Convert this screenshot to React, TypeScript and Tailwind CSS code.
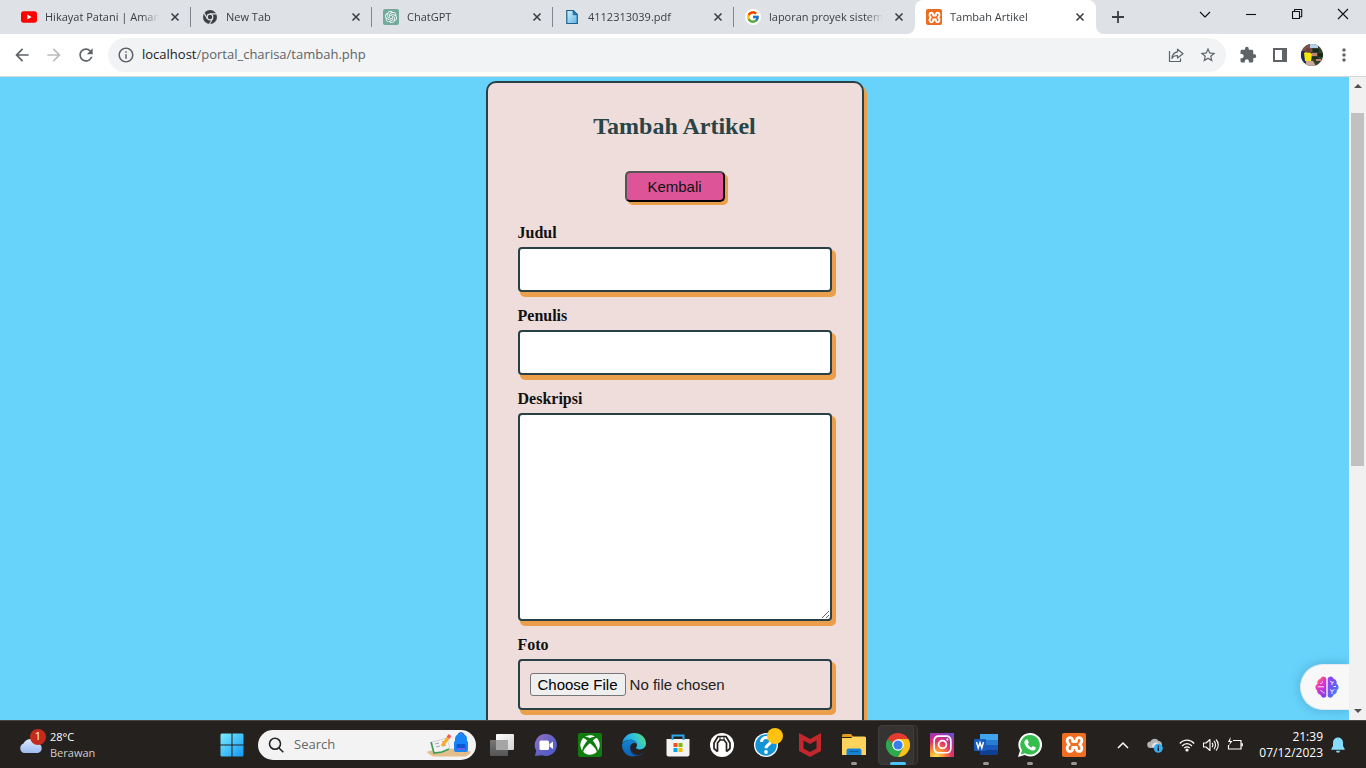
import React from "react";
import { FcGoogle } from "react-icons/fc";
import { MdArrowBack, MdArrowForward, MdExtension, MdInfoOutline, MdMoreVert, MdRefresh, MdStarBorder } from "react-icons/md";
import { SiOpenai } from "react-icons/si";
import { FaInstagram, FaXbox } from "react-icons/fa";

const uiFont = "font-['Segoe_UI','Open_Sans',sans-serif]";

function YoutubeIcon() {
  return (
    <svg viewBox="0 0 16 16" className="size-4">
      <rect y="2.3" width="16" height="11.4" rx="2.6" fill="#f00" />
      <path d="M6.4 5.6v4.8L10.6 8z" fill="#fff" />
    </svg>
  );
}

function GreyChromeIcon() {
  return (
    <svg viewBox="0 0 16 16" className="size-4">
      <circle cx="8" cy="8" r="7" fill="#3c4043" />
      <circle cx="8" cy="8" r="3.4" fill="#dee1e6" />
      <circle cx="8" cy="8" r="2.2" fill="#3c4043" />
      <path d="M8 4.9h6.6M5.3 9.6 2 3.9M10.7 9.5 7.4 15.2" stroke="#dee1e6" strokeWidth="1.1" />
    </svg>
  );
}

function GptIcon() {
  return (
    <span className="flex size-4 items-center justify-center rounded-[2px] bg-[#74aa9c]">
      <SiOpenai className="size-3 text-white" />
    </span>
  );
}

function PdfFileIcon() {
  return (
    <svg viewBox="0 0 16 16" className="size-4">
      <defs>
        <linearGradient id="sheet" x1="0" y1="0" x2="1" y2="1">
          <stop offset="0" stopColor="#d8f1fc" />
          <stop offset="1" stopColor="#5bb4e6" />
        </linearGradient>
      </defs>
      <path d="M2.8 1.5h6.5l4 4v9H2.8z" fill="url(#sheet)" stroke="#1b5f8c" strokeWidth="1.2" />
      <path d="M9.2 1.5v4.2h4.1z" fill="#1d86c4" stroke="#1b5f8c" strokeWidth=".8" />
    </svg>
  );
}

function GoogleIcon() {
  return (
    <span className="flex size-4 items-center justify-center rounded-full bg-white">
      <FcGoogle className="size-[14px]" />
    </span>
  );
}

function XamppTabIcon() {
  return (
    <span className="flex size-4 items-center justify-center rounded-[2px] bg-[#ec6c1f]">
      <XamppMark className="size-[13px]" />
    </span>
  );
}

function XamppMark({ className }: { className: string }) {
  return (
    <svg viewBox="0 0 20 20" className={className} fill="none" stroke="#fff" strokeWidth="3" strokeLinejoin="round">
      <path d="M8 6.800C8.200 4 7.200 2.800 5.400 2.800 2 2.800 1 7.200 4.400 10 1 12.800 2 17.200 5.400 17.200c1.800 0 2.800-1.200 2.600-4h4c-.2 2.800.8 4 2.600 4 3.400 0 4.400-4.400 1-7.200 3.400-2.800 2.400-7.200-1-7.200-1.800 0-2.800 1.200-2.600 4z" />
    </svg>
  );
}

function CloseIcon() {
  return (
    <svg viewBox="0 0 16 16" className="size-4" stroke="#3c4043" strokeWidth="1.6">
      <path d="m4.500 4.500 7 7m0-7-7 7" />
    </svg>
  );
}

const tabs = [
  { title: "Hikayat Patani | Aman", icon: <YoutubeIcon /> },
  { title: "New Tab", icon: <GreyChromeIcon /> },
  { title: "ChatGPT", icon: <GptIcon /> },
  { title: "4112313039.pdf", icon: <PdfFileIcon /> },
  { title: "laporan proyek sistem", icon: <GoogleIcon /> },
  { title: "Tambah Artikel", icon: <XamppTabIcon />, active: true },
];

function TabStrip() {
  return (
    <div className="flex h-[34px] shrink-0 justify-between bg-[#dee1e6]">
      <div className="flex min-w-0 pl-[10px]">
        {tabs.map((tab, i) => (
          <div
            key={tab.title}
            className={`relative flex w-[181px] min-w-0 items-center gap-2 pr-2 pl-[11px] ${tab.active ? "rounded-t-lg bg-white" : ""}`}
          >
            {i > 0 && !tab.active && <span className="absolute top-[7px] -left-px h-5 w-px bg-[#80868b]" />}
            {tab.active && (
              <>
                <svg viewBox="0 0 8 8" className="absolute bottom-0 -left-2 size-2" fill="#fff"><path d="M8 0v8H0a8 8 0 0 0 8-8z" /></svg>
                <svg viewBox="0 0 8 8" className="absolute -right-2 bottom-0 size-2" fill="#fff"><path d="M0 0v8h8a8 8 0 0 1-8-8z" /></svg>
              </>
            )}
            <span className="shrink-0">{tab.icon}</span>
            <span className="min-w-0 flex-1 overflow-hidden whitespace-nowrap text-[11px] leading-4 text-[#3c4043] [mask-image:linear-gradient(to_right,black_85%,transparent)]">
              {tab.title}
            </span>
            <button aria-label={`Close ${tab.title}`} className="shrink-0"><CloseIcon /></button>
          </div>
        ))}
        <button aria-label="New tab" className="ml-[14px] flex items-center">
          <svg viewBox="0 0 16 16" className="size-4" stroke="#3c4043" strokeWidth="1.8"><path d="M8 2v12M2 8h12" /></svg>
        </button>
      </div>
      <div className="flex h-7 shrink-0 items-center">
        {[
          ["Search tabs", "m3 6 5 5 5-5"],
          ["Minimize", "M3 8.500h10"],
          ["Restore", "M3.500 5.500h7v7h-7zM5.500 5.500v-2h7.200v7.200h-2"],
          ["Close", "m3 3 10 10M13 3 3 13"],
        ].map(([label, d]) => (
          <button key={label} aria-label={label} className="flex w-[46px] justify-center">
            <svg viewBox="0 0 16 16" className="size-4" fill="none" stroke="#111" strokeWidth="1.1" strokeLinejoin="round"><path d={d} /></svg>
          </button>
        ))}
      </div>
    </div>
  );
}

function Avatar() {
  return (
    <svg viewBox="0 0 22 22" className="size-[22px] rounded-full">
      <rect width="22" height="22" fill="#34402f" />
      <path d="M0 0h11v8H0z" fill="#7d4f4d" />
      <path d="M9 0h8v4H9z" fill="#b7cfe8" />
      <path d="M0 7h4v12H0z" fill="#202b52" />
      <path d="M3 9c3-2 6-1 8 1l-1 7H4z" fill="#f4e70c" />
      <circle cx="7" cy="6.500" r="2.300" fill="#73413b" />
      <path d="M5 17h7l3 5H5z" fill="#caa89d" />
      <path d="M11 9h5v3h-5zM15 15h5v2h-5z" fill="#c28375" />
      <path d="M12 5h6v3h-6zM17 9h5v4h-5zM11 13h6v2h-6z" fill="#162d17" />
    </svg>
  );
}

const toolButton = "flex w-8 items-center justify-center";

function Toolbar() {
  return (
    <div className="flex h-[43px] shrink-0 items-center border-b border-[#d5d7da] bg-white pr-[6px] text-[#5f6368]">
      <div className="flex gap-3 pr-3 pl-3">
        <button aria-label="Back"><MdArrowBack className="size-5" /></button>
        <button aria-label="Forward" className="text-[#babcbe]"><MdArrowForward className="size-5" /></button>
        <button aria-label="Reload"><MdRefresh className="size-5" /></button>
      </div>
      <div className="flex h-[34px] min-w-0 flex-1 items-center rounded-full bg-[#f1f3f4] pr-[2px] pl-[9px]">
        <MdInfoOutline className="size-[18px] shrink-0" />
        <p className="min-w-0 flex-1 truncate pl-[7px] text-[13px]">
          <span className="text-[#202124]">localhost</span>/portal_charisa/tambah.php
        </p>
        <button aria-label="Share" className={toolButton}>
          <svg viewBox="0 0 18 18" className="size-[18px]" fill="none" stroke="#5f6368" strokeWidth="1.200">
            <path d="M2.500 5v10.500h11V12.500" />
            <path d="M10.500 3.200 16 7.700l-5.500 4.300V9.500C8 9.500 6 10.200 5 12.500c.2-4 2.300-6.200 5.500-6.700z" strokeLinejoin="round" />
          </svg>
        </button>
        <button aria-label="Bookmark" className={toolButton}><MdStarBorder className="size-[18px]" /></button>
      </div>
      <div className="flex items-center pl-[6px]">
        <button aria-label="Extensions" className={toolButton}><MdExtension className="size-[18px]" /></button>
        <button aria-label="Side panel" className={toolButton}>
          <svg viewBox="0 0 18 18" className="size-[18px]" fill="#5f6368" fillRule="evenodd"><path d="M2 2h14v14H2zm2 2v10h7V4z" /></svg>
        </button>
        <button aria-label="Profile" className={toolButton}><Avatar /></button>
        <button aria-label="Menu" className={toolButton}><MdMoreVert className="size-5" /></button>
      </div>
    </div>
  );
}

const box =
  "block w-full rounded border-2 border-[#284046] px-[10px] text-[15px] shadow-[3px_4px_0_1px_#eb9f4b]";

function Field({ id, label, children }: { id: string; label: string; children: React.ReactNode }) {
  return (
    <div className="mb-[15px]">
      <label htmlFor={id} className="mb-[5px] block text-base leading-[18px] font-bold text-[#111]">{label}</label>
      {children}
    </div>
  );
}

function ArticleForm() {
  return (
    <form className="mx-auto mt-1 h-max w-[378px] rounded-[10px] border-2 border-[#284046] bg-[#eedddb] px-[30px] pb-[90px] font-['Liberation_Serif',serif] shadow-[3px_3px_0_#eb9f4b]">
      <h1 className="mt-[29px] text-center text-2xl leading-7 font-bold text-[#284447]">Tambah Artikel</h1>
      <button
        type="button"
        className="mx-auto mt-[31px] mb-[22px] block h-[31px] w-[100px] rounded-[5px] border-2 border-t-[#555] border-r-black border-b-black border-l-[#555] bg-[#de5499] pt-px font-['Liberation_Sans',sans-serif] text-[15px] text-[#111] shadow-[3px_3px_0_#eb9f4b]"
      >
        Kembali
      </button>
      <Field id="judul" label="Judul"><input id="judul" type="text" className={`${box} h-[45px] bg-white`} /></Field>
      <Field id="penulis" label="Penulis"><input id="penulis" type="text" className={`${box} h-[45px] bg-white`} /></Field>
      <Field id="deskripsi" label="Deskripsi"><textarea id="deskripsi" className={`${box} h-[208px] resize bg-white py-[10px]`} /></Field>
      <Field id="foto" label="Foto">
        <input
          id="foto"
          type="file"
          className={`${box} h-[51px] pt-3 font-['Liberation_Sans',sans-serif] text-[#222] file:mr-1 file:h-[23px] file:rounded-[3px] file:border file:border-[#767676] file:bg-[#efefef] file:px-[7px] file:text-black`}
        />
      </Field>
    </form>
  );
}

function BrainIcon() {
  return (
    <svg viewBox="0 0 24 24" className="size-6">
      <defs>
        <linearGradient id="brainL" x1="0" y1="0" x2=".6" y2="1">
          <stop offset="0" stopColor="#ffa12b" /><stop offset=".45" stopColor="#e935c1" /><stop offset="1" stopColor="#8a3df0" />
        </linearGradient>
        <linearGradient id="brainR" x1="0" y1="0" x2="1" y2="1">
          <stop offset="0" stopColor="#9b3df2" /><stop offset=".6" stopColor="#5b62f5" /><stop offset="1" stopColor="#22b8ff" />
        </linearGradient>
      </defs>
      <path d="M11.300 3.500C10 .6 6 .8 5.300 4 3 4.200 1.800 6.500 2.500 8.800-.2 10.500-.2 14 2.200 15.500c-.3 2.500 1.300 4 3.300 4.200C6.500 23.500 10.300 23.500 11.300 21z" fill="url(#brainL)" />
      <path d="M12.700 3.500C14 .6 18 .8 18.700 4c2.300.2 3.500 2.500 2.800 4.800 2.700 1.700 2.700 5.200.3 6.700.3 2.500-1.300 4-3.300 4.200-1 3.800-4.800 3.800-5.800 1.300z" fill="url(#brainR)" />
      <path d="M7.500 6.500c0 1.500-.8 2-2 2M2.800 11.800h6.200M5.500 15.500c2 0 2 2.500 4 2.500M15 6l2 1.500 2-.5M17 7.500V10M15 14.500l2 1.500 2.500-1.500M17 16v3M21 11.500h-2.500" fill="none" stroke="#fbe9ff" strokeWidth="1" />
    </svg>
  );
}

function Page() {
  return (
    <main className="relative flex min-h-0 flex-1 overflow-hidden bg-[#67d3fb]">
      <div className="flex min-w-0 flex-1 overflow-hidden"><ArticleForm /></div>
      <button aria-label="Assistant" className="absolute right-[17px] bottom-[10px] flex h-[46px] w-[49px] items-center rounded-l-full border border-r-0 border-[#e3e9ee] bg-[#f8f8f9] pl-[14px] shadow-[0_0_12px_rgba(0,60,90,0.25)]">
        <BrainIcon />
      </button>
      <div className="z-10 flex w-[17px] shrink-0 flex-col items-center bg-[#f1f1f1]">
        <svg viewBox="0 0 8 4" className="mt-[7px] h-1 w-2" fill="#505050"><path d="m0 4 4-4 4 4z" /></svg>
        <div className="mt-[25px] h-[353px] w-[13px] bg-[#c1c1c1]" />
        <svg viewBox="0 0 8 4" className="mt-auto mb-[7px] h-1 w-2" fill="#505050"><path d="m0 0 4 4 4-4z" /></svg>
      </div>
    </main>
  );
}

function TaskView() {
  return (
    <svg viewBox="0 0 24 24" className="size-6">
      <defs>
        <linearGradient id="tvF" x1="0" y1="0" x2="1" y2="1"><stop offset="0" stopColor="#fff" /><stop offset="1" stopColor="#d2d2d2" /></linearGradient>
        <linearGradient id="tvB" x1="0" y1="0" x2="0" y2="1"><stop offset="0" stopColor="#777" /><stop offset="1" stopColor="#555" /></linearGradient>
      </defs>
      <rect x="6" y="1" width="18" height="16" rx="1" fill="url(#tvF)" />
      <rect y="7" width="18" height="16" rx="1" fill="url(#tvB)" />
      <path d="M6 7h12v10H6z" fill="#a5a5a5" />
    </svg>
  );
}

function ChatIcon() {
  return (
    <svg viewBox="0 0 24 24" className="size-6">
      <defs><linearGradient id="chat" x1="0" y1="0" x2="1" y2="1"><stop offset="0" stopColor="#9a6fc0" /><stop offset=".5" stopColor="#6264c7" /><stop offset="1" stopColor="#5059c9" /></linearGradient></defs>
      <path d="M12 1a11 11 0 1 1-4 21.300L1 23l1.200-5.500A11 11 0 0 1 12 1z" fill="url(#chat)" />
      <rect x="5.500" y="7.500" width="9.500" height="9.500" rx="1.500" fill="#fff" />
      <path d="m15.500 11 3.500-2.500v7.500l-3.500-2.500z" fill="#fff" />
    </svg>
  );
}

function XboxIcon() {
  return <span className="flex size-6 items-center justify-center rounded-[2px] bg-[#107c10]"><FaXbox className="size-5 text-white" /></span>;
}

function EdgeIcon() {
  return (
    <svg viewBox="0 0 24 24" className="size-6">
      <defs>
        <linearGradient id="edgeA" x1="0" y1=".4" x2="1" y2="0"><stop offset="0" stopColor="#1b9de2" /><stop offset=".5" stopColor="#2fc2df" /><stop offset="1" stopColor="#69df58" /></linearGradient>
        <linearGradient id="edgeB" x1="0" y1="0" x2="0" y2="1"><stop offset="0" stopColor="#1387d4" /><stop offset="1" stopColor="#0f60b4" /></linearGradient>
      </defs>
      <path d="M.300 10.500C1 4.500 6 0 12 0c6.800 0 12 4.800 12 10.200 0 4-3 6.200-6.200 6.200-2.600 0-4-1-3.800-1.900.2-.6 1-1 1-2.600C15 9 12 6.700 8.500 6.700 4.500 6.700 1.500 8.500.3 10.500z" fill="url(#edgeA)" />
      <path d="M.2 10.900C1.400 8.600 4.500 6.900 8.300 6.900c3.500 0 5.800 1.900 6.500 3.900-1-.9-2.500-1.200-4-.6-2.800 1.200-3.700 5.300-1.600 8.500 1.400 2.200 3.300 3.500 5.300 4.300C6.500 25.200-.8 19 .2 10.900z" fill="url(#edgeB)" />
      <path d="M8.800 12.300c-1 3.300.5 7.200 3.700 8.800 3.300 1.600 7.200.8 10-3.100-1.500 3-4.300 5-8 5.100C10 22.500 6.300 18.200 8.800 12.300z" fill="#17468b" />
    </svg>
  );
}

function StoreIcon() {
  return (
    <svg viewBox="0 0 24 24" className="size-6">
      <path d="M.5 6h23v15.500a2 2 0 0 1-2 2h-19a2 2 0 0 1-2-2z" fill="#f3f3f3" />
      <path d="M6.500 7V2.500h11V7" fill="none" stroke="#28a8ea" strokeWidth="2" />
      <path d="M7.500 10h4v4h-4z" fill="#f25022" /><path d="M12.500 10h4v4h-4z" fill="#7fba00" />
      <path d="M7.500 15h4v4h-4z" fill="#00a4ef" /><path d="M12.500 15h4v4h-4z" fill="#ffb900" />
    </svg>
  );
}

function HelmetIcon() {
  return (
    <svg viewBox="0 0 24 24" className="size-6">
      <circle cx="12" cy="12" r="12" fill="#fff" />
      <g fill="none" stroke="#25211f" strokeWidth="1.700" strokeLinejoin="round">
        <path d="M7.500 18.500 4 15.500V10l4-6.500h8l4 6.500v5.500l-3.500 3" />
        <path d="M7.500 18.500V10L10 7h4l2.500 3v8.500" />
        <path d="M10 3.500V7M14 3.500V7" strokeWidth="1" />
      </g>
    </svg>
  );
}

function HelpIcon() {
  return (
    <span className="relative flex">
      <svg viewBox="0 0 24 24" className="size-6">
        <circle cx="12" cy="12" r="12" fill="#fff" /><circle cx="12" cy="12" r="10.700" fill="#1394d6" />
        <path d="M7.500 9c0-6 9.500-5.500 9.200-.7C16.500 11.500 12 11.500 12 15.300" fill="none" stroke="#fff" strokeWidth="3" />
        <circle cx="12" cy="19" r="1.900" fill="#fff" />
      </svg>
      <span className="absolute -top-[5px] -right-[5px] size-4 rounded-full bg-[#ffc20e]" />
    </span>
  );
}

function McAfeeIcon() {
  return (
    <svg viewBox="0 0 24 24" className="size-6">
      <path d="m1 0 11 6 11-6v18l-11 6-11-6zM5.500 7.500v8L12 19l6.500-3.500v-8L12 11z" fill="#c1272d" fillRule="evenodd" />
    </svg>
  );
}

function FolderIcon() {
  return (
    <svg viewBox="0 0 24 24" className="size-6">
      <path d="M0 4V2.500Q0 1 1.500 1H9l2.500 3z" fill="#e29c15" />
      <path d="M0 5h9l2-1.500h11.500Q24 3.500 24 5v17H0z" fill="#ffd45c" />
      <path d="M4.500 22v-4.500q0-2 2-2h11q2 0 2 2V22z" fill="#1784d8" />
      <path d="M7.500 18.500h9" stroke="#0b5ba5" strokeWidth="1.200" />
    </svg>
  );
}

function ChromeIcon() {
  return (
    <svg viewBox="0 0 24 24" className="size-6">
      <path d="M12 12 1.600 6A12 12 0 0 1 22.400 6z" fill="#e33b2e" />
      <path d="M12 12V6h10.400A12 12 0 0 1 12 24l-1-2z" fill="#fbc116" />
      <path d="M1.600 6A12 12 0 0 0 12 24l5.200-9L12 12l-5.200 3z" fill="#2da94f" />
      <path d="M1.600 6 6.800 15 12 12V6z" fill="#2da94f" />
      <path d="M12 6H1.600l5 3.500z" fill="#e33b2e" />
      <circle cx="12" cy="12" r="5.800" fill="#fff" /><circle cx="12" cy="12" r="4.600" fill="#3b7ded" />
    </svg>
  );
}

function InstagramIcon() {
  return (
    <span className="flex size-6 items-center justify-center bg-[radial-gradient(circle_at_25%_100%,#ffd84f_5%,#fb8a33_28%,#e3326b_52%,#b32fa4_72%,#5557d8_100%)]">
      <FaInstagram className="size-[21px] text-white" />
    </span>
  );
}

function WordIcon() {
  return (
    <svg viewBox="0 0 24 24" className="size-6">
      <path d="M6 1h18v6H6z" fill="#41a5ee" /><path d="M6 7h18v5H6z" fill="#2b7cd3" />
      <path d="M6 12h18v5H6z" fill="#185abd" /><path d="M6 17h18v5H6z" fill="#103f91" />
      <rect y="6" width="12" height="12" rx="1" fill="#185abd" />
      <path d="m2.500 9 1.700 6L6 9.500 7.800 15l1.700-6" fill="none" stroke="#fff" strokeWidth="1.400" />
    </svg>
  );
}

function WhatsAppIcon() {
  return (
    <svg viewBox="0 0 24 24" className="size-6">
      <path d="M12.300 0a11.700 11.700 0 1 1-5.500 22L0 24l2-6.500A11.700 11.700 0 0 1 12.300 0z" fill="#fff" />
      <path d="M12.300 2A9.800 9.800 0 1 1 7 20.200l-4.200 1.200L4 17.300A9.800 9.800 0 0 1 12.300 2z" fill="#35bd4d" />
      <path d="M8 6.500h1.500l1.400 3-1.100 1.400c.9 1.700 2.100 2.800 3.800 3.600l1.300-1.400 2.900 1.500c.1 2-1.400 3.200-3.200 3-4-.8-7.400-4.200-8.200-7.600-.2-1.500.5-2.800 1.600-3.500z" fill="#fff" />
    </svg>
  );
}

function XamppIcon() {
  return <span className="flex size-6 items-center justify-center rounded-[2px] bg-[#ef6e22]"><XamppMark className="size-[19px]" /></span>;
}

const apps = [
  { name: "Task view", icon: <TaskView /> },
  { name: "Chat", icon: <ChatIcon /> },
  { name: "Xbox", icon: <XboxIcon /> },
  { name: "Edge", icon: <EdgeIcon /> },
  { name: "Store", icon: <StoreIcon /> },
  { name: "Helmet", icon: <HelmetIcon /> },
  { name: "Help", icon: <HelpIcon /> },
  { name: "McAfee", icon: <McAfeeIcon /> },
  { name: "Files", icon: <FolderIcon />, open: true },
  { name: "Chrome", icon: <ChromeIcon />, active: true },
  { name: "Instagram", icon: <InstagramIcon /> },
  { name: "Word", icon: <WordIcon />, open: true },
  { name: "WhatsApp", icon: <WhatsAppIcon />, open: true },
  { name: "XAMPP", icon: <XamppIcon />, open: true },
];

function WeatherIcon() {
  return (
    <span className="relative flex">
      <svg viewBox="0 0 24 16" className="h-4 w-6">
        <defs><linearGradient id="cloud" x1="0" y1="0" x2="0" y2="1"><stop offset="0" stopColor="#dbe8fb" /><stop offset="1" stopColor="#9dbcf0" /></linearGradient></defs>
        <path d="M5 16a5 5 0 0 1-.5-9.500A8 8 0 0 1 19 6.500 4.900 4.900 0 0 1 19 16z" fill="url(#cloud)" />
      </svg>
      <span className="absolute -top-2 -right-[3px] flex size-4 items-center justify-center rounded-full bg-[#c42b1c] text-[11px] text-white">1</span>
    </span>
  );
}

function SearchArt() {
  return (
    <svg viewBox="0 0 44 26" className="h-[26px] w-11">
      <path d="M0 19.500q11-3 22-3t22 3c-1 3-3 3-5 5H6c-2-2-5-2-6-5z" fill="#e3bd8c" />
      <path d="m5 10 8-2 7-2 3 11-8 3-8 1z" fill="#f4f3f4" stroke="#c4cdc6" strokeWidth=".8" />
      <path d="m4 10 3 11 8-1 7-3" fill="none" stroke="#3a9e57" strokeWidth="1.600" />
      <path d="m8 12 4-1m-3 4 4-1m2-4 3-1m-2 5 3-1" stroke="#a79bb8" />
      <path d="m15 14 6-8" stroke="#ffab24" strokeWidth="3.200" /><path d="m21 6 2-3" stroke="#f25b66" strokeWidth="3.500" />
      <path d="M31 3q3-4.500 6 0" fill="none" stroke="#1557c2" strokeWidth="1.500" />
      <path d="M28 7q0-5 6-5t6 5v2l1 1v8q0 2-2 2H29q-2 0-2-2v-8l1-1z" fill="#1785f7" />
      <rect x="29.500" y="12" width="9" height="6" rx="1" fill="#0c58d2" /><path d="M30 17h8" stroke="#c46cf3" />
    </svg>
  );
}

function Taskbar() {
  return (
    <footer className="flex h-12 shrink-0 items-center border-t border-[#474442] bg-[#24211f] pl-[19px] text-white">
      <div className="flex w-[191px] shrink-0 items-center gap-[7px]">
        <WeatherIcon />
        <div className="text-[11px] leading-4">
          <p>28°C</p>
          <p className="text-[#cfcdcb]">Berawan</p>
        </div>
      </div>
      <div className="flex h-full items-center">
        <button aria-label="Start" className="flex w-11 justify-center">
          <svg viewBox="0 0 24 24" className="size-6">
            <defs><linearGradient id="win" gradientUnits="userSpaceOnUse" x1="0" y1="0" x2="24" y2="24"><stop offset="0" stopColor="#7df0ff" /><stop offset="1" stopColor="#0f95f5" /></linearGradient></defs>
            <path d="M1.500.5h10v11H.5v-10zM12.500.5h10l1 1v10h-11zM.5 12.500h11v11h-10l-1-1zM12.500 12.500h11v10l-1 1h-10z" fill="url(#win)" />
          </svg>
        </button>
        <label className="mx-1 flex h-[30px] w-[218px] items-center rounded-full bg-[#f3f3f3] pr-[5px] pl-[10px]">
          <svg viewBox="0 0 16 16" className="size-4 shrink-0" fill="none" stroke="#222" strokeWidth="1.600"><circle cx="7" cy="6.700" r="5.500" /><path d="m11 11 4.300 4.300" /></svg>
          <input aria-label="Search" placeholder="Search" className="ml-[10px] w-0 min-w-0 flex-1 bg-transparent text-[13px] text-[#222] placeholder:text-[#666]" />
          <SearchArt />
        </label>
        {apps.map((app) => (
          <button
            key={app.name}
            aria-label={app.name}
            className="relative flex h-10 w-11 items-center justify-center"
          >
            {app.active && (
              <>
                <span className="absolute top-0 left-1 h-full w-[38px] rounded border border-[#3c3a38] bg-[#2c2a28]" />
                <span className="absolute top-0 left-[2px] h-full w-9 rounded border border-[#403e3c] bg-[#363432]" />
                <span className="absolute bottom-0 h-[3px] w-4 rounded-full bg-[#4cc2ff]" />
              </>
            )}
            {app.open && <span className="absolute bottom-0 h-[3px] w-[6px] rounded-full bg-[#9a9896]" />}
            <span className="relative">{app.icon}</span>
          </button>
        ))}
      </div>
      <div className="ml-auto flex shrink-0 items-center pr-[21px]">
        <svg viewBox="0 0 12 12" className="mr-[18px] size-3" fill="none" stroke="#fff" strokeWidth="1.500"><path d="m1 9 5-5 5 5" /></svg>
        <svg viewBox="0 0 16 16" className="mr-4 size-4">
          <path d="M3.500 11a3.200 3.200 0 0 1 0-6.500C5 .8 10 .8 11.500 4c2 0 4 2 3.500 4.500L9 11z" fill="#b5b5b5" /><path d="M5 10C5 6 8 4.500 11 6l3 4z" fill="#e4e4e4" />
          <circle cx="11.300" cy="11.300" r="4.500" fill="#38aef0" /><path d="M11.300 8.500v1.300m0 .8v3.500" stroke="#111" strokeWidth="1.300" />
        </svg>
        <svg viewBox="0 0 16 16" className="mr-2 size-4" fill="none" stroke="#fff" strokeWidth="1.200"><path d="M.8 6.500c4-4.500 10.400-4.500 14.400 0M3 9c3-3.200 7-3.200 10 0M5.200 11.200c1.700-1.700 3.900-1.700 5.600 0" /><circle cx="8" cy="13" r="1" fill="#fff" /></svg>
        <svg viewBox="0 0 16 16" className="mr-2 size-4" fill="none" stroke="#fff" strokeWidth="1.100"><path d="M.5 6v4h2.500l4 3.500v-11L3 6zM9 5.800c1 1.200 1 3.200 0 4.400M11 4c2 2 2 6 0 8M13 2.500c3 3 3 8 0 11" strokeLinejoin="round" /></svg>
        <svg viewBox="0 0 16 16" className="mr-4 size-4" fill="none" stroke="#fff" strokeWidth="1.200"><path d="M6 3.500h8V12H1.500V8M15.300 6.300v3" /><path d="M3.500 0 1 5h2.200L2 8.500 5.500 4H3.300z" fill="#fff" stroke="none" /></svg>
        <div className="text-right text-xs leading-4">
          <p>21:39</p>
          <p>07/12/2023</p>
        </div>
        <svg viewBox="0 0 14 16" className="ml-2 h-4 w-[14px]" fill="#85ddff"><path d="M7 .5a5 5 0 0 1 5 5V9l1.700 3v.8H.300V12L2 9V5.500a5 5 0 0 1 5-5zM5 13.800h4a2 2 0 0 1-4 0z" /></svg>
      </div>
    </footer>
  );
}

export default function App() {
  return (
    <div className={`flex h-screen flex-col overflow-hidden ${uiFont}`}>
      <TabStrip />
      <Toolbar />
      <Page />
      <Taskbar />
    </div>
  );
}
